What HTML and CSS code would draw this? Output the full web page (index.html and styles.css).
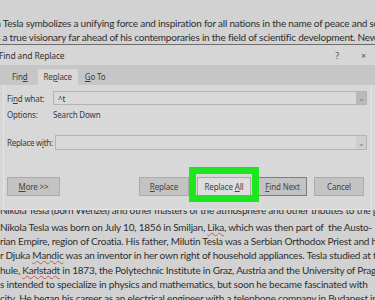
FILE: index.html
```html
<!DOCTYPE html>
<html lang="en">
<head>
    <meta charset="UTF-8">
    <meta name="viewport" content="width=device-width, initial-scale=1.0">
    <title>Find and Replace</title>
    <link rel="stylesheet" href="styles.css">
</head>
<body>

    <div class="page">
        <div class="doc">
            <p class="para para-top">
                <span class="line shift">a Tesla symbolizes a unifying force and inspiration for all nations in the name of peace and science</span>
                <span class="line shift">s a true visionary far ahead of his contemporaries in the field of scientific development. New York</span>
            </p>
            <p class="para para-bottom">
                <span class="line cut">Nikola Tesla (born Wenzel) and other masters of the atmosphere and other tributes to the great genius</span>
                <span class="line">Nikola Tesla was born on July 10, 1856 in Smiljan, <u class="spell">Lika</u>, which was then part of &nbsp;the Austo-</span>
                <span class="line">rian Empire, region of Croatia. His father, Milutin Tesla was a Serbian Orthodox Priest and his</span>
                <span class="line">r Djuka <u class="spell">Mandic</u> was an inventor in her own right of household appliances. Tesla studied at the</span>
                <span class="line">hule, <u class="spell">Karlstadt</u> in 1873, the Polytechnic Institute in Graz, Austria and the University of Prague. .</span>
                <span class="line">s intended to specialize in physics and mathematics, but soon he became fascinated with</span>
                <span class="line">city. He began his career as an electrical engineer with a telephone company in Budapest in 1881</span>
            </p>
        </div>

        <!-- Find and Replace dialog lies over the document -->
        <div class="dialog">
            <div class="title-bar">
                <span class="title">Find and Replace</span>
                <span class="title-icons">
                    <span class="help">?</span>
                    <span class="close">&times;</span>
                </span>
            </div>
            <div class="tabs">
                <span class="tab">Fin<u>d</u></span>
                <span class="tab active">Re<u>p</u>lace</span>
                <span class="tab"><u>G</u>o To</span>
            </div>
            <div class="panel">
                <div class="row row-find">
                    <span class="label">Fi<u>n</u>d what:</span>
                    <div class="field">
                        <span class="field-text">^t</span>
                        <span class="drop">&#8964;</span>
                    </div>
                </div>
                <div class="row row-options">
                    <span class="label">Options:</span>
                    <span class="value">Search Down</span>
                </div>
                <div class="row row-replace">
                    <span class="label">Replace w<u>i</u>th:</span>
                    <div class="field">
                        <span class="field-text"></span>
                        <span class="drop">&#8964;</span>
                    </div>
                </div>
                <div class="buttons">
                    <button class="btn btn-more"><u>M</u>ore &gt;&gt;</button>
                    <span class="spacer"></span>
                    <button class="btn btn-replace"><u>R</u>eplace</button>
                    <span class="btn-wrap">
                        <button class="btn btn-all">Replace <u>A</u>ll</button>
                        <span class="highlight"></span>
                    </span>
                    <button class="btn btn-next"><u>F</u>ind Next</button>
                    <button class="btn btn-cancel">Cancel</button>
                </div>
            </div>
        </div>
    </div>

</body>
</html>
```

FILE: styles.css
```css
body {
    margin: 0;
    background-color: #d2d2d2;
}
.page {
    position: relative;
    width: 375px;
    height: 300px;
    overflow: hidden;
    background-color: #d2d2d2;
}
.doc {
    padding-top: 16px;
    font-family: Lato, sans-serif;
    font-size: 10px;
    letter-spacing: -0.22px;
    color: #2e2e2e;
}
.para {
    margin: 0;
}
.para-bottom {
    margin-top: 161px;
}
.line {
    display: block;
    white-space: nowrap;
    line-height: 14.3px;
}
.line.cut {
    line-height: 8px;
    margin-bottom: 6.3px;
}
.shift {
    margin-left: -4px;
}
.spell {
    text-decoration: underline wavy #c55;
    text-decoration-thickness: 1px;
}

/* dialog */
.dialog {
    position: absolute;
    top: 44px;
    left: 0;
    width: 375px;
    height: 165px;
    display: flex;
    flex-direction: column;
    background-color: #d6d6d6;
    border-top: 1px solid #6e6e6e;
    font-family: "Noto Sans", sans-serif;
    font-size: 8px;
    letter-spacing: -0.15px;
    color: #3a3a3a;
}
.dialog u {
    text-decoration-thickness: 1px;
}
.title-bar {
    height: 20px;
    display: flex;
    align-items: center;
    justify-content: space-between;
    padding: 0 9px 0 0;
}
.title {
    margin-left: -1px;
    font-size: 8.5px;
    color: #333;
}
.title-icons {
    display: flex;
    gap: 22px;
    color: #555;
    font-size: 9px;
}
.tabs {
    height: 20px;
    display: flex;
    align-items: flex-end;
    padding-left: 6px;
    background-color: #c6c6c6;
}
.tab {
    height: 16px;
    line-height: 15px;
    padding: 0 6px;
    margin-right: 1px;
}
.tab.active {
    background-color: #d8d8d8;
    margin-left: 3px;
}
.panel {
    flex: 1;
    margin: 0 3px;
    padding: 6px 4px 0 3px;
    border-left: 1px solid #e4e4e4;
    border-right: 1px solid #e4e4e4;
    border-bottom: 1px solid #e4e4e4;
    background-color: #d8d8d8;
}
.row {
    display: flex;
    align-items: center;
}
.label {
    width: 46px;
    flex: none;
    white-space: nowrap;
}
.row-find {
    height: 14px;
}
.row-options {
    height: 16px;
    margin-top: 1px;
}
.row-replace {
    height: 15px;
    margin-top: 13px;
}
.row-replace .label {
    width: 48px;
    letter-spacing: -0.3px;
}
.field {
    flex: 1;
    height: 100%;
    display: flex;
    align-items: center;
    justify-content: space-between;
    box-sizing: border-box;
    border: 1px solid #b4b4b4;
    background-color: #d9d9d9;
}
.field-text {
    padding-left: 4px;
    color: #333;
}
.drop {
    width: 10px;
    height: 100%;
    display: flex;
    align-items: center;
    justify-content: center;
    background-color: #b9b9b9;
    color: #777;
    font-size: 8px;
    line-height: 6px;
}
.row-replace .drop {
    background-color: #cfcfcf;
}
.buttons {
    display: flex;
    align-items: center;
    margin-top: 27px;
}
.spacer {
    flex: 1;
}
.btn {
    height: 19px;
    padding: 0;
    box-sizing: border-box;
    border: 1px solid #ababab;
    background-color: #c3c3c3;
    font-family: "Noto Sans", sans-serif;
    font-size: 8px;
    letter-spacing: -0.15px;
    color: #444;
}
.btn-more {
    width: 53px;
}
.btn-replace {
    width: 50px;
}
.btn-wrap {
    position: relative;
    margin: 0 7px 0 8px;
}
.btn-all {
    display: block;
    width: 54px;
    background-color: #dddddd;
    border-color: #a8a8a8;
}
.highlight {
    position: absolute;
    top: -10px;
    left: -8px;
    right: -8px;
    bottom: -6px;
    border: 7px solid #1ee61e;
}
.btn-next {
    width: 49px;
    border-color: #7d7d7d;
}
.btn-cancel {
    width: 50px;
    margin-left: 7px;
    margin-right: 3px;
}
```
